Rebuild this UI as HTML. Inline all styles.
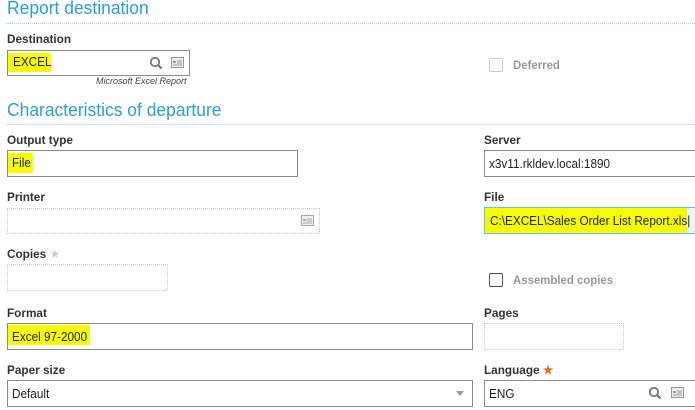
<!DOCTYPE html>
<html><head><meta charset="utf-8"><style>
*{margin:0;padding:0;box-sizing:border-box}
body{width:695px;height:410px;background:#fff;position:relative;overflow:hidden;font-family:"Liberation Sans",sans-serif;color:#333}
.a{position:absolute}
.h{font-size:18px;color:#2a9fd8;white-space:nowrap;transform:scaleX(.97);transform-origin:left}
.dl{height:0;border-top:1px dotted #9fd3ee;left:7px;width:688px}
.l{font-size:12px;font-weight:bold;color:#333;white-space:nowrap;transform:scaleX(.98);transform-origin:left}
.b{border:1px solid #8a8a8a;background:#fff}
.d{border:1px dotted #c8c8c8;background:#fff}
.v{font-size:12.5px;color:#222;white-space:nowrap;transform:scaleX(.94);transform-origin:left}
.hl{background:#f7fb00}
.cb{width:14px;height:14px;border:1.5px solid #555;border-radius:2px}
.ct{font-size:12px;font-weight:bold;color:#999;transform:scaleX(.95);transform-origin:left;white-space:nowrap}
</style></head><body>
<div class="a h" style="left:7px;top:-2px">Report destination</div>
<div class="a dl" style="top:23px"></div>
<div class="a l" style="left:7px;top:32px">Destination</div>
<div class="a b" style="left:7px;top:50px;width:183px;height:26px"></div>
<div class="a hl" style="left:8px;top:53px;width:43px;height:19px"></div>
<div class="a v" style="left:13px;top:55px">EXCEL</div>
<svg class="a" style="left:149px;top:56px" width="14" height="14" viewBox="0 0 14 14"><circle cx="6" cy="6" r="4.2" fill="none" stroke="#777" stroke-width="1.8"/><path d="M9 9l3.5 3.5" stroke="#777" stroke-width="2.2"/></svg>
<svg class="a" style="left:171px;top:57px" width="13" height="11" viewBox="0 0 13 11"><rect x=".5" y=".5" width="12" height="10" fill="#eee" stroke="#999"/><rect x="2" y="4" width="3" height="2" fill="#999"/><path d="M6 4h5M6 6h5M2 8h9" stroke="#999"/></svg>
<div class="a" style="left:96px;top:76px;font-size:9px;font-style:italic;color:#444;white-space:nowrap">Microsoft Excel Report</div>
<div class="a cb" style="left:489px;top:58px;border-color:#ccc"></div>
<div class="a ct" style="left:513px;top:58px;color:#999">Deferred</div>
<div class="a h" style="left:7px;top:100px">Characteristics of departure</div>
<div class="a dl" style="top:124px"></div>

<div class="a l" style="left:7px;top:133px">Output type</div>
<div class="a b" style="left:7px;top:150px;width:291px;height:27px"></div>
<div class="a hl" style="left:8px;top:153px;width:25px;height:20px"></div>
<div class="a v" style="left:12px;top:156px">File</div>
<div class="a l" style="left:484px;top:133px">Server</div>
<div class="a b" style="left:484px;top:150px;width:215px;height:27px"></div>
<div class="a v" style="left:489px;top:157px">x3v11.rkldev.local:1890</div>

<div class="a l" style="left:7px;top:190px">Printer</div>
<div class="a d" style="left:7px;top:208px;width:313px;height:26px"></div>
<svg class="a" style="left:301px;top:215px" width="13" height="11" viewBox="0 0 13 11"><rect x=".5" y=".5" width="12" height="10" fill="#eee" stroke="#aaa"/><rect x="2" y="4" width="3" height="2" fill="#aaa"/><path d="M6 4h5M6 6h5M2 8h9" stroke="#aaa"/></svg>
<div class="a l" style="left:484px;top:190px">File</div>
<div class="a" style="left:484px;top:207px;width:215px;height:27px;border:1px solid #5cc6ec;background:#eaf6fc"></div>
<div class="a hl" style="left:485px;top:208px;width:202px;height:25px"></div>
<div class="a v" style="left:490px;top:214px">C:\EXCEL\Sales Order List Report.xls|</div>

<div class="a l" style="left:7px;top:247px">Copies <span style="color:#ccc;font-weight:normal">★</span></div>
<div class="a d" style="left:7px;top:264px;width:161px;height:27px"></div>
<div class="a cb" style="left:489px;top:273px"></div>
<div class="a ct" style="left:513px;top:273px">Assembled copies</div>

<div class="a l" style="left:7px;top:306px">Format</div>
<div class="a b" style="left:7px;top:323px;width:466px;height:27px"></div>
<div class="a hl" style="left:8px;top:325px;width:82px;height:20px"></div>
<div class="a v" style="left:12px;top:330px">Excel 97-2000</div>
<div class="a l" style="left:484px;top:306px">Pages</div>
<div class="a d" style="left:484px;top:323px;width:140px;height:27px"></div>

<div class="a l" style="left:7px;top:363px">Paper size</div>
<div class="a b" style="left:7px;top:380px;width:466px;height:27px"></div>
<div class="a v" style="left:12px;top:387px">Default</div>
<div class="a" style="left:456px;top:391px;width:0;height:0;border-left:4px solid transparent;border-right:4px solid transparent;border-top:5px solid #999"></div>
<div class="a l" style="left:484px;top:363px">Language <span style="color:#f26b1d">★</span></div>
<div class="a b" style="left:484px;top:380px;width:215px;height:27px"></div>
<div class="a v" style="left:489px;top:387px">ENG</div>
<svg class="a" style="left:648px;top:386px" width="14" height="14" viewBox="0 0 14 14"><circle cx="6" cy="6" r="4.2" fill="none" stroke="#777" stroke-width="1.8"/><path d="M9 9l3.5 3.5" stroke="#777" stroke-width="2.2"/></svg>
<svg class="a" style="left:671px;top:387px" width="13" height="11" viewBox="0 0 13 11"><rect x=".5" y=".5" width="12" height="10" fill="#eee" stroke="#999"/><rect x="2" y="4" width="3" height="2" fill="#999"/><path d="M6 4h5M6 6h5M2 8h9" stroke="#999"/></svg>
</body></html>
